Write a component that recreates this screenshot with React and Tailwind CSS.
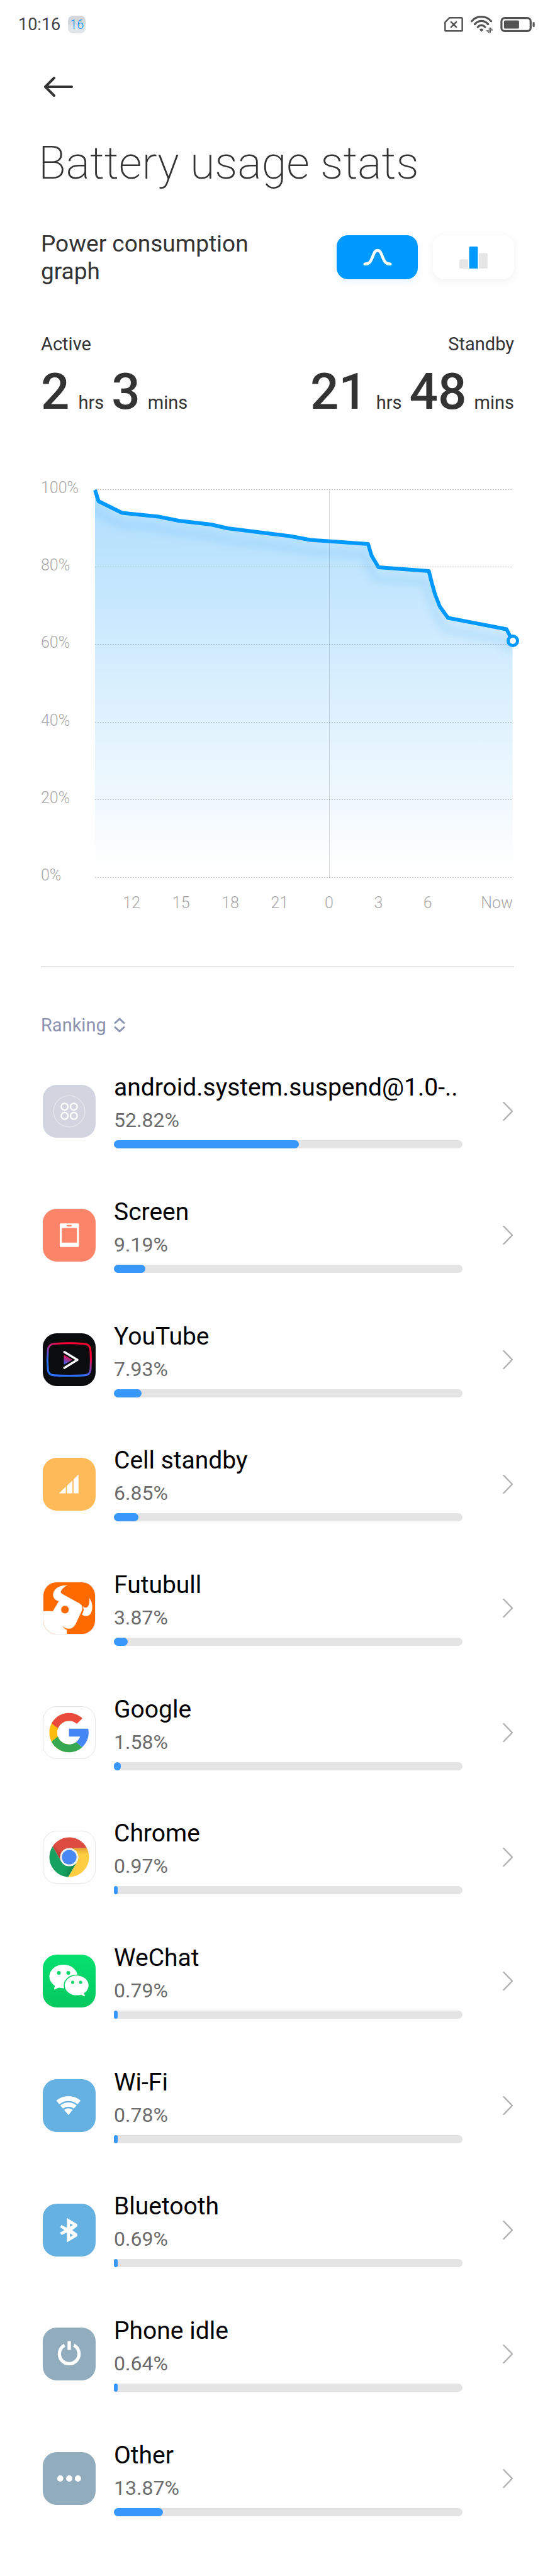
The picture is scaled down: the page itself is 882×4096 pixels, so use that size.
const apps = [
  { name: 'android.system.suspend@1.0-..', percent: 52.82, icon: SystemIcon },
  { name: 'Screen', percent: 9.19, icon: ScreenIcon },
  { name: 'YouTube', percent: 7.93, icon: YouTubeIcon },
  { name: 'Cell standby', percent: 6.85, icon: CellIcon },
  { name: 'Futubull', percent: 3.87, icon: FutubullIcon },
  { name: 'Google', percent: 1.58, icon: GoogleIcon },
  { name: 'Chrome', percent: 0.97, icon: ChromeIcon },
  { name: 'WeChat', percent: 0.79, icon: WeChatIcon },
  { name: 'Wi-Fi', percent: 0.78, icon: WifiIcon },
  { name: 'Bluetooth', percent: 0.69, icon: BluetoothIcon },
  { name: 'Phone idle', percent: 0.64, icon: IdleIcon },
  { name: 'Other', percent: 13.87, icon: OtherIcon },
];

const levels = ['100%', '80%', '60%', '40%', '20%', '0%'];
const hours = ['12', '15', '18', '21', '0', '3', '6'];

// battery level over the last 24 hours, in plot coordinates
const points =
  '0,1 5.6,19 43,37.5 101,43.5 133,50 184.5,56 210.5,62 310,74.5 342,80.5 434,87 439.5,105.5 450.5,124 530.5,130 535,148 540.5,167.5 548,186.5 561,204.5 654,222.5 663.5,241';

/* App icons, all drawn on a 103 x 103 tile */

function Tile({ className, children }) {
  return (
    <span className={`block h-[84px] w-[84px] shrink-0 overflow-hidden rounded-[22px] ${className}`}>
      <svg viewBox="0 0 103 103" className="h-full w-full" fill="none" aria-hidden="true">
        {children}
      </svg>
    </span>
  );
}

function SystemIcon() {
  return (
    <Tile className="bg-[#d2d5e0]">
      <circle cx="51.5" cy="51.5" r="30.5" stroke="#fff" strokeOpacity="0.4" strokeWidth="1.8" />
      <g stroke="#fff" strokeWidth="2.8">
        <circle cx="42.5" cy="42.5" r="6.6" />
        <circle cx="60.5" cy="42.5" r="6.6" />
        <circle cx="42.5" cy="60.5" r="6.6" />
        <circle cx="60.5" cy="60.5" r="6.6" />
      </g>
    </Tile>
  );
}

function ScreenIcon() {
  return (
    <Tile className="bg-[#fb8569]">
      <rect x="33" y="28.5" width="37.5" height="46" rx="2" fill="#fff" />
      <rect x="37" y="37.5" width="29.5" height="28.5" fill="#fb8569" />
      <rect x="46.5" y="31.5" width="10" height="3" rx="1" fill="#fb8569" />
    </Tile>
  );
}

function YouTubeIcon() {
  return (
    <Tile className="bg-[#0b0c0e]">
      <defs>
        <linearGradient id="ytRing" x1="0.75" y1="0.1" x2="0.25" y2="0.9">
          <stop offset="0.15" stopColor="#ff0033" />
          <stop offset="0.75" stopColor="#2b6fff" />
        </linearGradient>
        <linearGradient id="ytPlay" x1="0.5" y1="0" x2="0.2" y2="1">
          <stop offset="0.2" stopColor="#d81b5c" />
          <stop offset="1" stopColor="#3a63f0" />
        </linearGradient>
      </defs>
      <path
        d="M22 20.5Q51.5 18 81 20.5Q92 21.5 93 32Q94.5 51.5 93 71Q92 81.5 81 82Q51.5 83.5 22 82Q11 81.5 10 71Q8 51.5 10 32Q11 21.5 22 20.5Z"
        stroke="url(#ytRing)"
        strokeWidth="3.8"
      />
      <path d="M42 36.5L67.5 51.8L42 67.5" stroke="#fff" strokeWidth="4.2" strokeLinecap="round" strokeLinejoin="round" />
      <path d="M41 43.5Q41 42 42.5 43L56.5 50.8Q58 51.8 56.5 52.8L42.5 60.5Q41 61 41 59.5Z" fill="url(#ytPlay)" />
    </Tile>
  );
}

function CellIcon() {
  return (
    <Tile className="bg-[#feba58]">
      <g fill="#fff">
        <path d="M31.5 69.3L44.8 56.5V69.3Z" />
        <path d="M47 54.5L57.8 44V69.3H47Z" />
        <path d="M60 42L69.6 32.5V69.3H60Z" />
      </g>
    </Tile>
  );
}

function FutubullIcon() {
  return (
    <Tile className="border border-[#ececec] bg-white">
      <rect width="103" height="103" fill="#ff6a00" />
      <path
        d="M0 57.5H19L30.5 38C22 35 19 30 19.3 24C20 13 32 5 48.7 6C42 8 37 13 34.5 19Q34 21.5 37.7 23.3L72 42Q80.5 47 76.5 57L64.5 83Q60 92.5 51 92.6C46 92.5 42 90.5 38.7 87.5Q41 93 46.7 94.5V103H0Z"
        fill="#fff"
      />
      <circle cx="43" cy="54.5" r="7.7" fill="#ff6a00" />
      <path
        d="M91.7 31.5C96 37 98.5 46 97.3 53C96 62 92 67.5 84.5 67.5Q80 67.5 76.8 64.5Q80.5 58 80.3 54Q80 50.5 78.7 48Q82 51 86 50.3C91 49 92.5 40 91.7 31.5Z"
        fill="#fff"
      />
    </Tile>
  );
}

function GoogleIcon() {
  return (
    <Tile className="border border-[#e6e6e6] bg-white">
      <g transform="translate(4 4.5) scale(1.96)">
        <path
          fill="#fbbc0d"
          d="M24 36c-6.627 0-12-5.373-12-12s5.373-12 12-12V4C12.955 4 4 12.955 4 24s8.955 20 20 20z"
        />
        <path
          fill="#ea4a3c"
          d="M6.306 14.691l6.571 4.819C14.655 15.108 18.961 12 24 12c3.059 0 5.842 1.154 7.961 3.039l5.657-5.657C34.046 6.053 29.268 4 24 4 16.318 4 9.656 8.337 6.306 14.691z"
        />
        <path
          fill="#36a852"
          d="M24 44c5.166 0 9.86-1.977 13.409-5.192l-6.19-5.238C29.211 35.091 26.715 36 24 36c-5.202 0-9.619-3.317-11.283-7.946l-6.522 5.025C9.505 39.556 16.227 44 24 44z"
        />
        <path
          fill="#4486f4"
          d="M43.611 20H24v8h11.303c-.792 2.237-2.231 4.166-4.087 5.571l6.193 5.237C41.5 35 44 30 44 24c0-1.341-.138-2.65-.389-4z"
        />
      </g>
    </Tile>
  );
}

function ChromeIcon() {
  return (
    <Tile className="border border-[#e6e6e6] bg-white">
      <defs>
        <linearGradient id="crYellow" x1="0" y1="0" x2="0" y2="1">
          <stop offset="0" stopColor="#e3a52c" />
          <stop offset="0.22" stopColor="#ffcd42" />
        </linearGradient>
        <linearGradient id="crGreen" x1="0.95" y1="0.85" x2="0.6" y2="0.65">
          <stop offset="0" stopColor="#0c7d46" />
          <stop offset="1" stopColor="#17a160" />
        </linearGradient>
        <linearGradient id="crRed" x1="0.05" y1="0.7" x2="0.25" y2="0.55">
          <stop offset="0" stopColor="#a93a30" />
          <stop offset="1" stopColor="#dd4c40" />
        </linearGradient>
      </defs>
      <path d="M18.3 30A39.5 39.5 0 0 1 86.7 33.5H51.5A18 18 0 0 0 35.9 60.5Z" fill="url(#crRed)" />
      <path d="M86.7 33.5A39.5 39.5 0 0 1 49.5 91L67.1 60.5A18 18 0 0 0 51.5 33.5Z" fill="url(#crYellow)" />
      <path d="M49.5 91A39.5 39.5 0 0 1 18.3 30L35.9 60.5A18 18 0 0 0 67.1 60.5Z" fill="url(#crGreen)" />
      <circle cx="51.5" cy="51.5" r="18" fill="#f1f1f1" />
      <circle cx="51.5" cy="51.5" r="14.6" fill="#4a89f3" />
    </Tile>
  );
}

function WeChatIcon() {
  return (
    <Tile className="bg-linear-to-b from-[#05e06f] to-[#06c95f]">
      <g fill="#fff">
        <ellipse cx="40.3" cy="42.5" rx="27.5" ry="23" />
        <path d="M24.5 58L22 66.5Q22 68.5 24 67.7L33 63.5Z" />
      </g>
      <ellipse cx="66" cy="60" rx="25.2" ry="21.2" fill="#06d367" />
      <g fill="#fff">
        <ellipse cx="66" cy="60" rx="23.2" ry="19.2" />
        <path d="M79.5 73L82 79.5Q82 81.7 80 80.8L72.5 77Z" />
      </g>
      <g fill="#06d76a">
        <circle cx="31.3" cy="35.5" r="3.7" />
        <circle cx="49.7" cy="35.5" r="3.7" />
        <circle cx="58.3" cy="54" r="3.1" />
        <circle cx="73.7" cy="54" r="3.1" />
      </g>
    </Tile>
  );
}

function WifiIcon() {
  return (
    <Tile className="bg-[#64b1e2]">
      <path d="M29.3 45.4A32.1 32.1 0 0 1 70.7 45.4" stroke="#fff" strokeWidth="9.4" />
      <path d="M36.8 54.3A20.4 20.4 0 0 1 63.2 54.3" stroke="#fff" strokeWidth="8.2" />
      <path d="M50 69.8L41.6 59.9A13 13 0 0 1 58.4 59.9Z" fill="#fff" />
    </Tile>
  );
}

function BluetoothIcon() {
  return (
    <Tile className="bg-[#64b1e2]">
      <path
        d="M47 28L67 39.7V44L57.5 51.5L67 58.5V63.5L47 75.3V56L36.7 61L33.7 56.3L42 51.6L33.7 46L36.7 41.3L47 47.3ZM53 38.5V45L58.5 41.5ZM53 58V65L58.5 61.5Z"
        fill="#fff"
        fillRule="evenodd"
      />
    </Tile>
  );
}

function IdleIcon() {
  return (
    <Tile className="bg-[#91acbd]">
      <path d="M60.5 34.3A19.2 19.2 0 1 1 42.5 34.3" stroke="#fff" strokeWidth="6.5" />
      <path d="M51.5 26.5V43.5" stroke="#fff" strokeWidth="6.5" />
    </Tile>
  );
}

function OtherIcon() {
  return (
    <Tile className="bg-[#91acbd]">
      <g fill="#fff">
        <circle cx="34" cy="51.5" r="6" />
        <circle cx="51.5" cy="51.5" r="6" />
        <circle cx="68.5" cy="51.5" r="6" />
      </g>
    </Tile>
  );
}

function StatusBar() {
  return (
    <div className="flex h-[77px] items-center justify-between pr-8 pl-[29px]">
      <div className="flex items-center gap-3 text-[27px] leading-8 text-[#454545]">
        <span>10:16</span>
        <span className="flex h-7 w-7 items-center justify-center rounded-lg bg-linear-to-b from-[#d3d7db] from-50% to-[#e1e5ea] to-50% text-[20px] leading-7 font-light text-[#0091ff]">
          16
        </span>
      </div>
      <div className="flex items-center text-[#545454]">
        {/* sim card missing */}
        <svg viewBox="0 0 36 29" className="mr-3 h-6 w-[30px]" fill="none" stroke="currentColor" strokeWidth="3" aria-hidden="true">
          <path d="M10 1.5H32.5Q34.5 1.5 34.5 3.5V25Q34.5 27 32.5 27H3.5Q1.5 27 1.5 25V10Z" strokeLinejoin="round" />
          <path d="M13 9.5L23 19.5M23 9.5L13 19.5" strokeLinecap="round" />
        </svg>
        <svg viewBox="0 0 43 34" className="mr-3 h-7 w-[35px]" fill="none" stroke="currentColor" strokeWidth="4" aria-hidden="true">
          <path d="M2 10.5C12 -1 30 -1 40 10.5" strokeLinecap="round" />
          <path d="M8 16.5C15 8 27 8 34 16.5" strokeLinecap="round" />
          <path d="M14 22C18 17 24 17 28 22" strokeLinecap="round" />
          <path d="M17 27Q21 23 25 27L21 31Z" fill="currentColor" stroke="none" />
          <path d="M36 23.5V33L31.5 29H35M38.5 33V23.5L43 28H39.5" strokeWidth="1.4" />
        </svg>
        <svg viewBox="0 0 68 30" className="h-6 w-[55px]" aria-hidden="true">
          <rect x="2" y="2" width="58" height="26" rx="6.5" fill="none" stroke="currentColor" strokeWidth="4" />
          <rect x="7" y="7" width="30" height="16" rx="2" fill="currentColor" />
          <rect x="64" y="10" width="4" height="10" rx="2" fill="currentColor" />
        </svg>
      </div>
    </div>
  );
}

function Duration({ label, hrs, mins, className }) {
  return (
    <div className={`flex flex-col ${className}`}>
      <span className="text-[29px] leading-10">{label}</span>
      <p className="mt-2 flex items-baseline text-[29px]">
        <span className="text-[80px] leading-[96px] font-medium">{hrs}</span>
        <span className="mr-3 ml-3.5">hrs</span>
        <span className="text-[80px] leading-[96px] font-medium">{mins}</span>
        <span className="ml-3">mins</span>
      </p>
    </div>
  );
}

function BatteryChart() {
  return (
    <div className="mt-[89px] flex pr-0.5 text-[25px] leading-8 font-light text-[#a8a8a8]">
      <div className="flex w-[86px] shrink-0 flex-col">
        <div className="flex flex-1 flex-col justify-between">
          {levels.map((level) => (
            <span key={level}>{level}</span>
          ))}
        </div>
        <div className="h-11" />
      </div>

      <div className="flex-1">
        <div className="pt-[18px] pb-3">
          <svg viewBox="0 0 664 618" className="block w-full overflow-visible" fill="none" role="img" aria-label="Battery level">
            <defs>
              <linearGradient id="area" gradientUnits="userSpaceOnUse" x1="0" y1="0" x2="0" y2="618">
                <stop offset="0" stopColor="#0099ff" stopOpacity="0.31" />
                <stop offset="0.95" stopColor="#0099ff" stopOpacity="0.005" />
                <stop offset="1" stopColor="#0099ff" stopOpacity="0" />
              </linearGradient>
              <clipPath id="areaClip">
                <polygon points={`${points} 664,618 0,618`} />
              </clipPath>
              <filter id="soft" x="-10%" y="-20%" width="120%" height="150%">
                <feGaussianBlur stdDeviation="6" />
              </filter>
            </defs>
            <polygon points={`${points} 664,618 0,618`} fill="url(#area)" />
            <g clipPath="url(#areaClip)">
              <polyline points={points} transform="translate(-4 18)" stroke="#0088dd" strokeOpacity="0.09" strokeWidth="14" filter="url(#soft)" />
            </g>
            <g stroke="#000" strokeOpacity="0.24" strokeDasharray="2 2">
              <path d="M0 0.5H664M0 123.5H664M0 246.5H664M0 370.5H664M0 493.5H664M0 617.5H664" />
            </g>
            <path d="M372.5 0V618" stroke="#000" strokeOpacity="0.15" />
            <polyline points={points} stroke="#0099ff" strokeWidth="6" strokeLinejoin="round" />
            <circle cx="664" cy="241" r="7.5" fill="#fff" stroke="#0099ff" strokeWidth="5" />
          </svg>
        </div>
        <div className="mt-3 flex pl-[19px]">
          {hours.map((hour) => (
            <span key={hour} className="flex-1 text-center">
              {hour}
            </span>
          ))}
          <span className="w-24 text-right">Now</span>
        </div>
      </div>
    </div>
  );
}

function AppRow({ app }) {
  const Icon = app.icon;
  return (
    <li className="flex">
      <a href="#" className="flex flex-1 items-center pr-0.5 pl-[3px]">
        <Icon />
        <div className="mr-16 ml-[29px] min-w-0 flex-1">
          <div className="truncate text-[39px] leading-11 text-black">{app.name}</div>
          <div className="mt-2.5 text-[32px] leading-10 text-[#6c6c6c]">{app.percent.toFixed(2)}%</div>
          <div className="mt-3 h-[13px] rounded-full bg-[#e4e4e4]">
            <div className="h-full rounded-full bg-[#3897fb]" style={{ width: `${Math.round(app.percent)}%` }} />
          </div>
        </div>
        <svg viewBox="0 0 16 30" className="h-[30px] w-4 shrink-0" fill="none" stroke="#b0b0b0" strokeWidth="2.4" aria-hidden="true">
          <path d="M1.5 1L15 15L1.5 29" strokeLinecap="round" strokeLinejoin="round" />
        </svg>
      </a>
    </li>
  );
}

export default function App() {
  return (
    <div className="flex min-h-screen flex-col bg-[#fefefe] font-[Roboto,sans-serif] text-[#333]">
      <StatusBar />

      <main className="flex flex-1 flex-col px-[65px] pb-14">
        <button type="button" aria-label="Back" className="mt-[37px] flex h-12 w-14 items-center justify-center">
          <svg viewBox="0 0 48 32" className="h-8 w-12" fill="none" stroke="currentColor" strokeWidth="4" strokeLinecap="round" strokeLinejoin="round" aria-hidden="true">
            <path d="M17 2L3 16L17 30M3 16H45" />
          </svg>
        </button>

        <h1 className="mt-14 -ml-1 text-[72px] leading-[84px] font-extralight">Battery usage stats</h1>

        <div className="mt-16 flex items-start justify-between">
          <h2 className="w-[400px] text-[37px] leading-11">Power consumption graph</h2>
          <div className="mt-2 flex gap-6">
            <button
              type="button"
              aria-label="Line graph"
              aria-pressed="true"
              className="flex h-[70px] w-[129px] items-center justify-center rounded-[18px] bg-[#0099ff] shadow-[0_4px_12px_rgba(0,153,255,0.08)]"
            >
              <svg viewBox="0 0 60 36" className="h-7 w-12" fill="none" stroke="#fff" strokeWidth="6" strokeLinecap="round" aria-hidden="true">
                <path d="M4 32C13 32 16 27 19.500 18S25 4 30 4S37 9 40.500 18S47 32 56 32" />
              </svg>
            </button>
            <button
              type="button"
              aria-label="Bar graph"
              aria-pressed="false"
              className="flex h-[70px] w-[129px] items-center justify-center rounded-[18px] bg-white shadow-[0_3px_12px_rgba(0,0,0,0.05)]"
            >
              <svg viewBox="0 0 55 43" className="h-[35px] w-[45px]" aria-hidden="true">
                <path d="M0 43V27Q0 25 2 25H15Q17 25 17 27V43Z" fill="#e6e6e6" />
                <path d="M19 43V2Q19 0 21 0H34Q36 0 36 2V43Z" fill="#0099ff" />
                <path d="M38 43V15Q38 13 40 13H53Q55 13 55 15V43Z" fill="#e6e6e6" />
              </svg>
            </button>
          </div>
        </div>

        <div className="mt-[73px] flex justify-between">
          <Duration label="Active" hrs="2" mins="3" className="items-start" />
          <Duration label="Standby" hrs="21" mins="48" className="items-end" />
        </div>

        <BatteryChart />

        <hr className="mt-[84px] border-t-2 border-[#e6e6e6]" />

        <button type="button" className="mt-[72px] flex items-center gap-3 self-start text-[29px] leading-10 text-[#8c93b3]">
          Ranking
          <svg viewBox="0 0 18 24" className="h-6 w-[18px]" fill="none" stroke="currentColor" strokeWidth="3" strokeLinecap="round" strokeLinejoin="round" aria-hidden="true">
            <path d="M2 8.5L9 2L16 8.5M2 15.5L9 22L16 15.5" />
          </svg>
        </button>

        <ul className="mt-[18px] grid flex-1 auto-rows-fr">
          {apps.map((app) => (
            <AppRow key={app.name} app={app} />
          ))}
        </ul>
      </main>
    </div>
  );
}
